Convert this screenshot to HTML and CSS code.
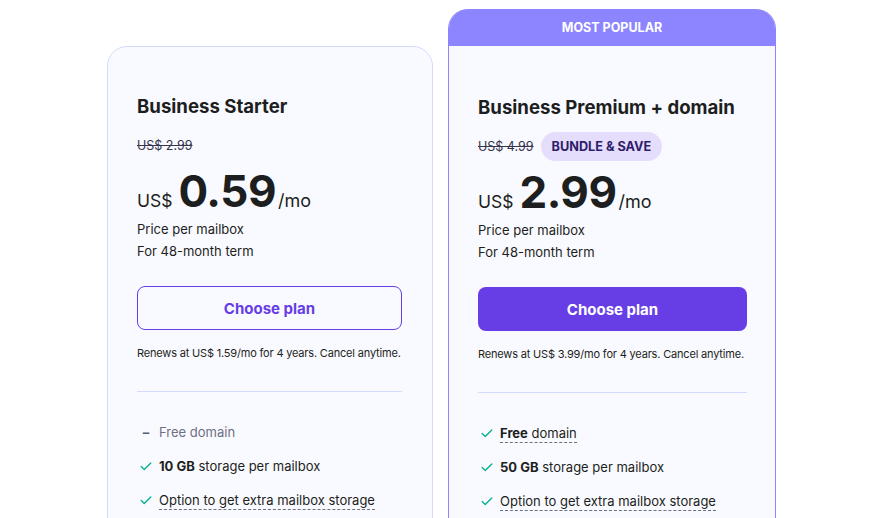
FILE: index.html
```html
<!DOCTYPE html>
<html lang="en">
<head>
<meta charset="utf-8">
<title>Email plans</title>
<link rel="stylesheet" href="styles.css">
</head>
<body>
<div class="plans">
  <section class="card card-starter">
    <div class="body">
      <h2 class="title">Business Starter</h2>
      <div class="old-row"><span class="old">US$ 2.99</span></div>
      <div class="price"><span class="cur">US$</span><span class="amount">0.59</span><span class="per">/mo</span></div>
      <p class="note">Price per mailbox</p>
      <p class="note">For 48-month term</p>
      <button class="btn btn-outline">Choose plan</button>
      <p class="renew">Renews at US$ 1.59/mo for 4 years. Cancel anytime.</p>
      <hr class="divider">
      <ul class="features">
        <li class="off"><span class="ico minus">&#8211;</span><span>Free domain</span></li>
        <li><span class="ico"><svg viewBox="0 0 16 16" width="14" height="14"><path d="M2.5 8.5l3.5 3.5 7.5-7.5" fill="none" stroke="#00b090" stroke-width="1.5" stroke-linecap="round" stroke-linejoin="round"/></svg></span><span><b>10 GB</b> storage per mailbox</span></li>
        <li><span class="ico"><svg viewBox="0 0 16 16" width="14" height="14"><path d="M2.5 8.5l3.5 3.5 7.5-7.5" fill="none" stroke="#00b090" stroke-width="1.5" stroke-linecap="round" stroke-linejoin="round"/></svg></span><span class="dashed">Option to get extra mailbox storage</span></li>
      </ul>
    </div>
  </section>
  <section class="card card-popular">
    <div class="ribbon">MOST POPULAR</div>
    <div class="body">
      <h2 class="title">Business Premium + domain</h2>
      <div class="old-row"><span class="old">US$ 4.99</span><span class="badge">BUNDLE &amp; SAVE</span></div>
      <div class="price"><span class="cur">US$</span><span class="amount">2.99</span><span class="per">/mo</span></div>
      <p class="note">Price per mailbox</p>
      <p class="note">For 48-month term</p>
      <button class="btn btn-fill">Choose plan</button>
      <p class="renew">Renews at US$ 3.99/mo for 4 years. Cancel anytime.</p>
      <hr class="divider">
      <ul class="features">
        <li><span class="ico"><svg viewBox="0 0 16 16" width="14" height="14"><path d="M2.5 8.5l3.5 3.5 7.5-7.5" fill="none" stroke="#00b090" stroke-width="1.5" stroke-linecap="round" stroke-linejoin="round"/></svg></span><span class="dashed"><b>Free</b> domain</span></li>
        <li><span class="ico"><svg viewBox="0 0 16 16" width="14" height="14"><path d="M2.5 8.5l3.5 3.5 7.5-7.5" fill="none" stroke="#00b090" stroke-width="1.5" stroke-linecap="round" stroke-linejoin="round"/></svg></span><span><b>50 GB</b> storage per mailbox</span></li>
        <li><span class="ico"><svg viewBox="0 0 16 16" width="14" height="14"><path d="M2.5 8.5l3.5 3.5 7.5-7.5" fill="none" stroke="#00b090" stroke-width="1.5" stroke-linecap="round" stroke-linejoin="round"/></svg></span><span class="dashed">Option to get extra mailbox storage</span></li>
      </ul>
    </div>
  </section>
</div>
</body>
</html>
```
FILE: styles.css
```css
* { box-sizing: border-box; }
html, body { margin: 0; padding: 0; background: #ffffff; }
body {
  font-family: Inter, "Noto Sans", "Liberation Sans", sans-serif;
  color: #1d1e20;
  overflow: hidden;
  height: 518px;
}
.plans {
  display: flex;
  justify-content: center;
  align-items: flex-start;
  gap: 15px;
  padding-top: 9px;
  padding-right: 2px;
}
.card {
  background: #f9faff;
  border-radius: 20px;
  overflow: hidden;
}
.card-starter {
  width: 326px;
  margin-top: 37px;
  border: 1px solid #d5dbff;
  height: 520px;
}
.card-starter .body { padding: 45px 30px 0 29px; }
.card-popular {
  width: 328px;
  border: 1px solid #8c85ff;
  border-top: none;
  height: 560px;
}
.card-popular .body { padding: 47px 28px 0 29px; }
.ribbon {
  background: #8c85ff;
  color: #ffffff;
  height: 37px;
  display: flex;
  align-items: center;
  justify-content: center;
  font-size: 12.5px;
  font-weight: 700;
}
.title {
  margin: 0;
  font-size: 18.6px;
  line-height: 28px;
  font-weight: 700;
}
.old-row {
  display: flex;
  align-items: center;
  gap: 7px;
  height: 30px;
  margin-top: 10px;
}
.old {
  font-size: 12.5px;
  text-decoration: line-through;
  color: #36344d;
}
.badge {
  background: #e4ddfb;
  color: #2f1c6a;
  font-size: 12.7px;
  font-weight: 700;
  border-radius: 15px;
  height: 29px;
  padding: 0 11px;
  display: flex;
  align-items: center;
}
.price {
  margin-top: 5px;
  height: 53px;
  display: flex;
  align-items: baseline;
}
.cur { font-size: 17.5px; margin-right: 6px; }
.amount {
  font-size: 44px;
  font-weight: 700;
  line-height: 53px;
  letter-spacing: -0.5px;
}
.per { font-size: 18px; margin-left: 2px; }
.note {
  margin: 0;
  font-size: 13px;
  line-height: 22px;
}
.btn {
  display: block;
  width: 100%;
  height: 44px;
  margin-top: 24px;
  border-radius: 8px;
  font-family: inherit;
  font-size: 15px;
  font-weight: 700;
  cursor: pointer;
}
.btn-outline {
  background: transparent;
  border: 1px solid #673de6;
  color: #673de6;
}
.btn-fill {
  background: #673de6;
  border: none;
  color: #ffffff;
}
.renew {
  margin: 14px 0 0;
  font-size: 11px;
  letter-spacing: -0.18px;
  line-height: 18px;
  white-space: nowrap;
  color: #1d1e20;
}
.divider {
  margin: 29px 0 0;
  border: none;
  border-top: 1px solid #d5dbff;
  height: 0;
}
.features {
  list-style: none;
  margin: 28px 0 0;
  padding: 0;
  display: flex;
  flex-direction: column;
  gap: 10px;
}
.features li {
  display: flex;
  align-items: center;
  height: 24px;
  font-size: 13px;
  gap: 6px;
}
.features b { font-weight: 700; }
.ico {
  width: 14px;
  display: flex;
  justify-content: center;
  align-items: center;
  margin-left: 2px;
}
.minus { color: #5a5d6e; font-size: 13px; font-weight: 700; }
.off { color: #6d7081; }
.dashed {
  border-bottom: 1px dashed #6d7081;
  line-height: 18px;
}
```
